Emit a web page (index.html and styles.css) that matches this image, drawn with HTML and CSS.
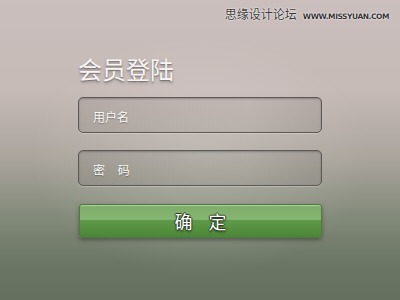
FILE: index.html
```html
<!DOCTYPE html>
<html lang="zh-CN">
<head>
    <meta charset="UTF-8">
    <title>会员登陆</title>
    <link rel="stylesheet" href="styles.css">
</head>
<body>

    <div class="mark">
        <span class="mark-name">思缘设计论坛</span>
        <span class="mark-url">WWW.MISSYUAN.COM</span>
    </div>

    <div class="login">
        <h1 class="title">会员登陆</h1>
        <div class="field"><span>用户名</span></div>
        <div class="field"><span class="spaced">密 码</span></div>
        <div class="button">确定</div>
    </div>

</body>
</html>
```

FILE: styles.css
```css
* {
    margin: 0;
    padding: 0;
    box-sizing: border-box;
    font-family: "Noto Sans CJK SC", "Noto Sans", sans-serif;
}

body {
    width: 400px;
    height: 300px;
    overflow: hidden;
    background:
        radial-gradient(ellipse 170px 120px at 50% 52%, rgba(255, 250, 245, 0.22), rgba(255, 255, 255, 0)),
        linear-gradient(to bottom, #cbbfbd 0%, #c6bab7 30%, #aba59e 52%, #838a7a 72%, #6b7664 88%, #66705f 100%);
}

.mark {
    height: 30px;
    display: flex;
    justify-content: flex-end;
    align-items: baseline;
    gap: 6px;
    padding: 6px 11px 0 0;
}

.mark-name {
    font-size: 12px;
    line-height: 16px;
    color: #3a3838;
    text-shadow: 0 0 1px #fff, 0 0 2px #fff;
}

.mark-url {
    font-family: "DejaVu Sans", sans-serif;
    font-size: 7.5px;
    font-weight: bold;
    letter-spacing: -0.45px;
    color: #333131;
    text-shadow: 0 0 1px #fff, 0 0 2px #fff;
}

.login {
    width: 244px;
    margin-left: 78px;
    padding-top: 25px;
}

.title {
    font-size: 24px;
    line-height: 28px;
    font-weight: normal;
    color: #f7f5f3;
    text-shadow: 0 1px 1px rgba(0, 0, 0, 0.3), 0 2px 3px rgba(0, 0, 0, 0.25);
    margin-bottom: 14px;
}

.field {
    height: 36px;
    border: 1px solid #5d5957;
    border-radius: 5px;
    background: linear-gradient(to right, rgba(60, 55, 50, 0.12), rgba(60, 55, 50, 0.06) 70%, rgba(60, 55, 50, 0.12));
    box-shadow: inset 0 1px 2px rgba(0, 0, 0, 0.25), 0 1px 0 rgba(255, 255, 255, 0.25);
    display: flex;
    align-items: center;
    padding: 2px 0 0 14px;
    margin-bottom: 17px;
    font-size: 12px;
    color: #fbfaf8;
    text-shadow: 0 1px 1px rgba(0, 0, 0, 0.3);
}

.field + .field {
    margin-bottom: 18px;
}

.spaced {
    word-spacing: 10px;
}

.button {
    height: 34px;
    width: 243px;
    margin-left: 1px;
    border: 1px solid #4f7a40;
    border-radius: 3px;
    background: linear-gradient(to bottom, #8ebb7a 0%, #7eae69 8%, #86b573 45%, #5e9a4b 47%, #55903f 75%, #4b853a 100%);
    box-shadow: 0 2px 4px rgba(0, 0, 0, 0.35), inset 0 1px 0 rgba(255, 255, 255, 0.25);
    display: flex;
    align-items: center;
    justify-content: center;
    font-size: 18px;
    letter-spacing: 16px;
    text-indent: 16px;
    color: #fff;
    text-shadow: 1px 0 0 #2a3d22, -1px 0 0 #2a3d22, 0 1px 0 #2a3d22, 0 -1px 0 #2a3d22, 0 2px 2px rgba(0, 0, 0, 0.4);
}
```
